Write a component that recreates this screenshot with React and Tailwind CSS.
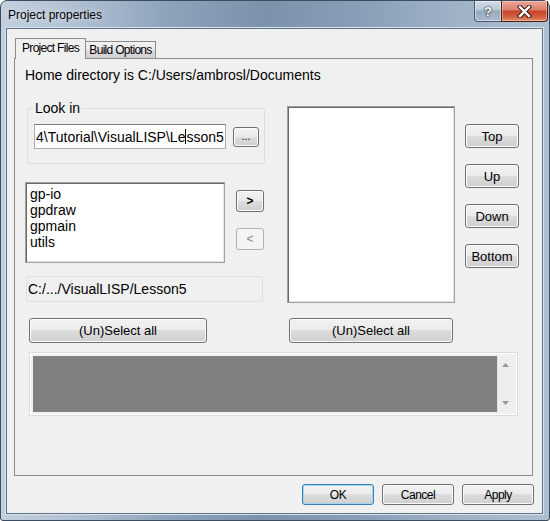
import React from 'react';

const ui = { fontFamily: '"Liberation Sans", Arial, sans-serif' };

// Win7 style push button
const Button = ({ className = '', children, isDefault = false, disabled = false }) => (
  <div
    className={
      'flex items-center justify-center rounded-[3px] border ' +
      (disabled
        ? 'border-[#adb2b5] bg-[#f4f4f4] text-[#838383] '
        : isDefault
          ? 'border-[#3c7fb1] bg-[linear-gradient(to_bottom,#f2f2f2_0%,#ebebeb_49%,#dddddd_50%,#cfcfcf_100%)] shadow-[inset_0_0_0_1px_#9cd6f5] text-black '
          : 'border-[#707070] bg-[linear-gradient(to_bottom,#f2f2f2_0%,#ebebeb_49%,#dddddd_50%,#cfcfcf_100%)] shadow-[inset_0_0_0_1px_#fbfbfb] text-black ') +
      className
    }
  >
    {children}
  </div>
);

const TitleButtons = () => (
  <div className="flex h-[21px] mr-[1px]">
    <div className="flex w-[27px] items-center justify-center rounded-bl-[4px] border border-t-0 border-r-0 border-[#4a5a6c] bg-[linear-gradient(to_bottom,#d3dde8_0%,#b9c7d6_45%,#97a9bc_50%,#a9bbcd_100%)] shadow-[inset_0_0_0_1px_rgba(255,255,255,0.45)]">
      <span
        className="text-[13px] font-bold leading-none text-white"
        style={{ ...ui, textShadow: '0 0 1px #2c3a48, 0 0 1px #2c3a48, 0 0 2px #2c3a48' }}
      >
        ?
      </span>
    </div>
    <div className="flex w-[47px] items-center justify-center rounded-br-[4px] border border-t-0 border-[#4a1f16] bg-[linear-gradient(to_bottom,#e9a99b_0%,#db7f6b_45%,#c8432c_50%,#d2603f_80%,#e2926f_100%)] shadow-[inset_0_0_0_1px_rgba(255,220,210,0.45)]">
      <svg width="15" height="13" viewBox="0 0 15 13">
        <path d="M3 2 L12 11 M12 2 L3 11" stroke="#3a1a12" strokeWidth="4.4" strokeLinecap="square" />
        <path d="M3 2 L12 11 M12 2 L3 11" stroke="#ffffff" strokeWidth="2.4" strokeLinecap="square" />
      </svg>
    </div>
  </div>
);

const Sunken = ({ className = '', children }) => (
  <div
    className={
      'border border-[#a0a0a0] bg-white shadow-[inset_1px_1px_0_#696969,inset_-1px_-1px_0_#e3e3e3] ' + className
    }
  >
    {children}
  </div>
);

export default function App() {
  const files = ['gp-io', 'gpdraw', 'gpmain', 'utils'];

  return (
    <div className="w-[550px] h-[521px] bg-white" style={ui}>
      {/* window frame */}
      <div className="flex h-full w-full flex-col rounded-t-[7px] rounded-b-[3px] border border-[#3b4d60] bg-[linear-gradient(to_right,#c2cfdd_0%,#b3c3d4_12%,#8fa4bb_30%,#7b92ab_48%,#8a9fb7_66%,#9eb1c5_82%,#aebfd0_100%)]">
        {/* title bar */}
        <div className="flex h-[28px] shrink-0 items-start justify-between">
          <div className="pl-[7px] pt-[7px] text-[12px] leading-[14px] text-black [text-shadow:0_0_6px_rgba(255,255,255,0.8)]">
            Project properties
          </div>
          <TitleButtons />
        </div>

        {/* client area */}
        <div className="mx-[6px] flex h-[484px] w-[535px] flex-col bg-[#f0f0f0] shadow-[0_0_0_1px_#5f7186,0_0_0_2px_#d9e3ee]">
          {/* tabs */}
          <div className="flex h-[29px] items-end pl-[8px] pt-[9px] text-[12px] tracking-[-0.7px]">
            <div className="relative z-10 -mb-px flex h-[21px] w-[71px] items-start justify-center border border-b-0 border-[#898c95] bg-[#f0f0f0] pt-[2px] leading-[14px]">
              Project Files
            </div>
            <div className="flex h-[17px] w-[70px] items-start justify-center border border-b-0 border-l-0 border-[#898c95] bg-[linear-gradient(to_bottom,#f2f2f2_0%,#ebebeb_50%,#dddddd_51%,#cfcfcf_100%)] pt-[2px] leading-[13px]">
              Build Options
            </div>
          </div>

          {/* tab page */}
          <div className="ml-[7px] h-[418px] w-[519px] border border-[#898c95] bg-[#f0f0f0] pl-[10px] pt-[8px] text-[14px] text-black">
            <div className="h-[16px] leading-[16px]">Home directory is C:/Users/ambrosl/Documents</div>

            <div className="mt-[23px] flex gap-[22px]">
              {/* left column */}
              <div className="flex w-[240px] flex-col">
                <div className="relative ml-[2px] mt-[2px] h-[56px] w-[238px] rounded-[3px] border border-[#d5dfe5] pl-[6px] pt-[15px]">
                  <div className="absolute left-[6px] top-[-9px] bg-[#f0f0f0] px-[1px] leading-[16px]">Look in</div>
                  <div className="flex items-start">
                    <div className="flex h-[25px] w-[192px] items-center overflow-hidden whitespace-nowrap border border-[#abadb3] border-t-[#7a7a7a] bg-white pl-[1px] leading-[16px]">
                      <span>4\Tutorial\VisualLISP\Le</span>
                      <span className="inline-block h-[15px] w-px bg-black" />
                      <span>sson5</span>
                    </div>
                    <Button className="ml-[7px] mt-[3px] h-[20px] w-[26px] pb-[2px] text-[11px] leading-none">...</Button>
                  </div>
                </div>

                <div className="mt-[18px] flex">
                  <Sunken className="h-[81px] w-[200px] pl-[4px] pt-[3px]">
                    {files.map((f) => (
                      <div key={f} className="leading-[16px]">{f}</div>
                    ))}
                  </Sunken>
                  <div className="ml-[11px] flex flex-col">
                    <Button className="mt-[8px] h-[22px] w-[28px] text-[12px] font-bold leading-none">&gt;</Button>
                    <Button disabled className="mt-[16px] h-[22px] w-[28px] text-[12px] leading-none">&lt;</Button>
                  </div>
                </div>

                <div className="ml-[1px] mt-[13px] flex h-[26px] w-[237px] items-center rounded-[2px] border border-[#dcdfe3] pl-[1px] leading-[16px]">
                  C:/.../VisualLISP/Lesson5
                </div>

                <Button className="ml-[4px] mt-[16px] h-[25px] w-[178px] text-[13px] leading-[15px]">(Un)Select all</Button>
              </div>

              {/* right column */}
              <div className="flex flex-col">
                <div className="flex">
                  <Sunken className="h-[197px] w-[168px]" />
                  <div className="ml-[10px] flex flex-col">
                    {['Top', 'Up', 'Down', 'Bottom'].map((b, i) => (
                      <Button
                        key={b}
                        className={(i === 0 ? 'mt-[18px] ' : 'mt-[16px] ') + 'h-[24px] w-[54px] text-[13px] leading-[15px]'}
                      >
                        {b}
                      </Button>
                    ))}
                  </div>
                </div>
                <Button className="ml-[2px] mt-[15px] h-[25px] w-[164px] text-[13px] leading-[15px]">(Un)Select all</Button>
              </div>
            </div>

            {/* build output area */}
            <div className="ml-[4px] mt-[9px] flex h-[64px] w-[489px] border border-[#dcdcdc] p-[3px] shadow-[inset_0_0_0_1px_#ffffff]">
              <div className="h-full flex-1 bg-[#808080]" />
              <div className="flex h-full w-[17px] flex-col items-center justify-between bg-[#eeeeee] py-[7px] shadow-[inset_1px_0_0_#e2e2e2]">
                <svg width="7" height="4" viewBox="0 0 7 4">
                  <path d="M0 4 L3.5 0 L7 4 Z" fill="#9a9a9a" />
                </svg>
                <svg width="7" height="4" viewBox="0 0 7 4">
                  <path d="M0 0 L3.5 4 L7 0 Z" fill="#9a9a9a" />
                </svg>
              </div>
            </div>
          </div>

          {/* dialog buttons */}
          <div className="mt-[8px] flex justify-end gap-[8px] pr-[8px] text-[12px] tracking-[-0.5px]">
            <Button isDefault className="h-[21px] w-[72px] leading-[14px]">OK</Button>
            <Button className="h-[21px] w-[72px] leading-[14px]">Cancel</Button>
            <Button className="h-[21px] w-[72px] leading-[14px]">Apply</Button>
          </div>
        </div>
      </div>
    </div>
  );
}
